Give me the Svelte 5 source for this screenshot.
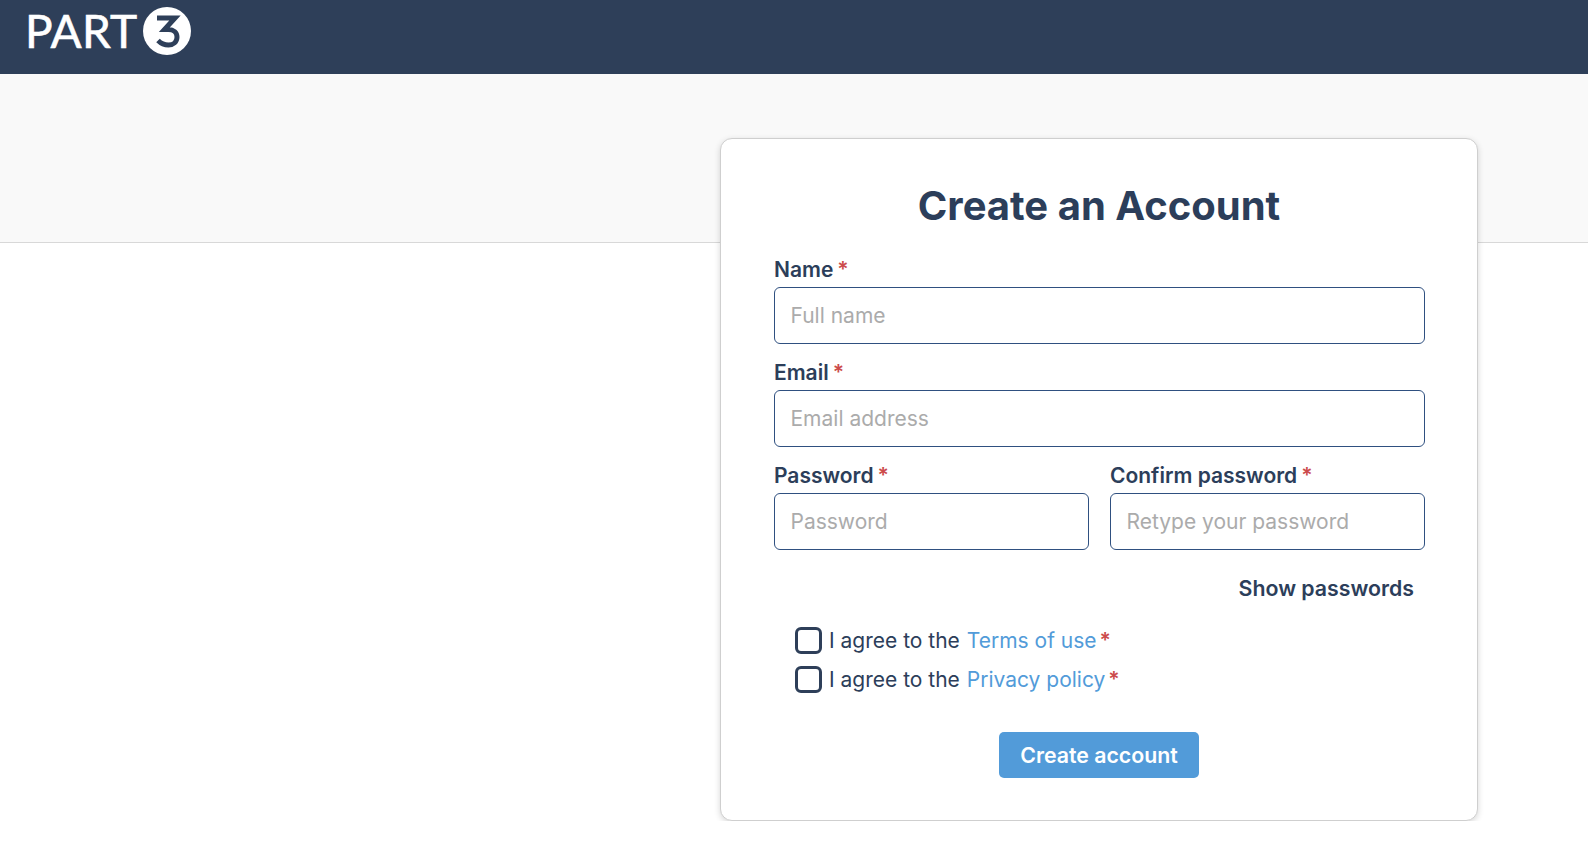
<script lang="ts">
  let showPasswords = $state(false);
</script>

<header class="topbar">
  <div class="logo">
    <span class="logo__word">PART</span>
    <svg class="logo__badge" viewBox="0 0 48 48" width="48" height="48" role="img" aria-label="3">
      <circle cx="24" cy="24" r="24" fill="#fff" />
      <path
        d="M14 11 H32 L21.5 22.5 H25.5 C30.5 22.5 34 25.5 34 30 C34 35 30 38 25.5 38 C21.5 38 18 36.5 15 33.5"
        fill="none"
        stroke="#2e3f59"
        stroke-width="5"
        stroke-linejoin="miter"
      />
    </svg>
  </div>
</header>

<main class="page">
  <div class="band"></div>
  <form class="card" onsubmit={(e) => e.preventDefault()}>
    <h1>Create an Account</h1>

    <div class="field">
      <label for="name">Name<span class="req">*</span></label>
      <input id="name" type="text" placeholder="Full name" />
    </div>
    <div class="field">
      <label for="email">Email<span class="req">*</span></label>
      <input id="email" type="email" placeholder="Email address" />
    </div>
    <div class="pair">
      <div class="field">
        <label for="pw">Password<span class="req">*</span></label>
        <input id="pw" type={showPasswords ? 'text' : 'password'} placeholder="Password" />
      </div>
      <div class="field">
        <label for="pw2">Confirm password<span class="req">*</span></label>
        <input id="pw2" type={showPasswords ? 'text' : 'password'} placeholder="Retype your password" />
      </div>
    </div>

    <div class="show-row">
      <button type="button" class="show" onclick={() => (showPasswords = !showPasswords)}>
        {showPasswords ? 'Hide passwords' : 'Show passwords'}
      </button>
    </div>

    <div class="agreements">
      <label class="check">
        <input type="checkbox" />
        <span>I agree to the <a href="#terms">Terms of use</a><span class="req">*</span></span>
      </label>
      <label class="check">
        <input type="checkbox" />
        <span>I agree to the <a href="#privacy">Privacy policy</a><span class="req">*</span></span>
      </label>
    </div>

    <div class="actions">
      <button type="submit" class="submit">Create account</button>
    </div>
  </form>
</main>

<style>
  :global(body) {
    margin: 0;
    background: #fff;
    font-family: Inter, "Liberation Sans", sans-serif;
    color: #2c3e5a;
  }
  .topbar {
    height: 74px;
    background: #2e3f59;
    padding-left: 25px;
    display: flex;
    align-items: flex-start;
  }
  .logo {
    display: flex;
    align-items: center;
    height: 62px;
  }
  .logo__word {
    font-family: Lato, sans-serif;
    font-size: 46px;
    font-weight: 400;
    color: #fff;
    line-height: 1;
    letter-spacing: 0.3px;
    -webkit-text-stroke: 0.6px #fff;
  }
  .logo__badge {
    display: block;
    margin-left: 5px;
  }
  .page {
    position: relative;
    display: flex;
    justify-content: flex-end;
    padding: 64px 110px 0 0;
  }
  .band {
    position: absolute;
    left: 0;
    right: 0;
    top: 0;
    height: 168px;
    background: #f9f9f9;
    border-bottom: 1px solid #d8d8d8;
  }
  .card {
    position: relative;
    width: 758px;
    height: 683px;
    box-sizing: border-box;
    padding: 47px 52px 0 53px;
    background: #fff;
    border: 1px solid #cfcfcf;
    border-radius: 12px;
    box-shadow: 0 2px 6px rgba(0, 0, 0, 0.16);
  }
  h1 {
    margin: 0 0 31px;
    padding-right: 1px;
    text-align: center;
    font-size: 40px;
    line-height: 40px;
    font-weight: 700;
    color: #2c3e5a;
  }
  .field {
    display: flex;
    flex-direction: column;
    min-width: 0;
    margin-bottom: 16.5px;
  }
  .field label {
    font-size: 21px;
    line-height: 26px;
    font-weight: 600;
    margin-bottom: 4px;
  }
  .req {
    color: #cc4b4b;
    margin-left: 4px;
    font-weight: 600;
  }
  .check .req {
    margin-left: 3px;
  }
  .field input {
    width: 100%;
    height: 56.5px;
    box-sizing: border-box;
    padding: 0 15.5px;
    border: 1px solid #2f5080;
    border-radius: 6px;
    font: inherit;
    font-size: 21px;
    color: #2c3e5a;
    outline: none;
  }
  .field input::placeholder {
    color: #ababab;
    opacity: 1;
  }
  .pair {
    display: grid;
    grid-template-columns: minmax(0, 1fr) minmax(0, 1fr);
    gap: 21px;
  }
  .show-row {
    display: flex;
    justify-content: flex-end;
    padding-right: 11px;
    margin-top: 5px;
  }
  .show {
    border: 0;
    background: none;
    padding: 0;
    font: inherit;
    font-size: 21.3px;
    line-height: 34px;
    font-weight: 600;
    color: #2c3e5a;
  }
  .agreements {
    display: flex;
    flex-direction: column;
    gap: 11.5px;
    padding-left: 21px;
    margin-top: 22px;
  }
  .check {
    display: flex;
    align-items: center;
    gap: 7px;
    height: 27px;
    font-size: 21px;
    color: #2c3e5a;
  }
  .check input {
    appearance: none;
    width: 27px;
    height: 27px;
    margin: 0;
    box-sizing: border-box;
    border: 3px solid #2e3f59;
    border-radius: 6px;
    background: #fff;
  }
  .check a {
    color: #529bd9;
    text-decoration: none;
    margin-left: 1px;
  }
  .actions {
    display: flex;
    justify-content: center;
    padding-right: 1px;
    margin-top: 39.5px;
  }
  .submit {
    width: 200px;
    height: 46px;
    border: 0;
    border-radius: 5px;
    background: #529bd9;
    color: #fff;
    font: inherit;
    font-size: 21.3px;
    font-weight: 600;
  }
</style>
